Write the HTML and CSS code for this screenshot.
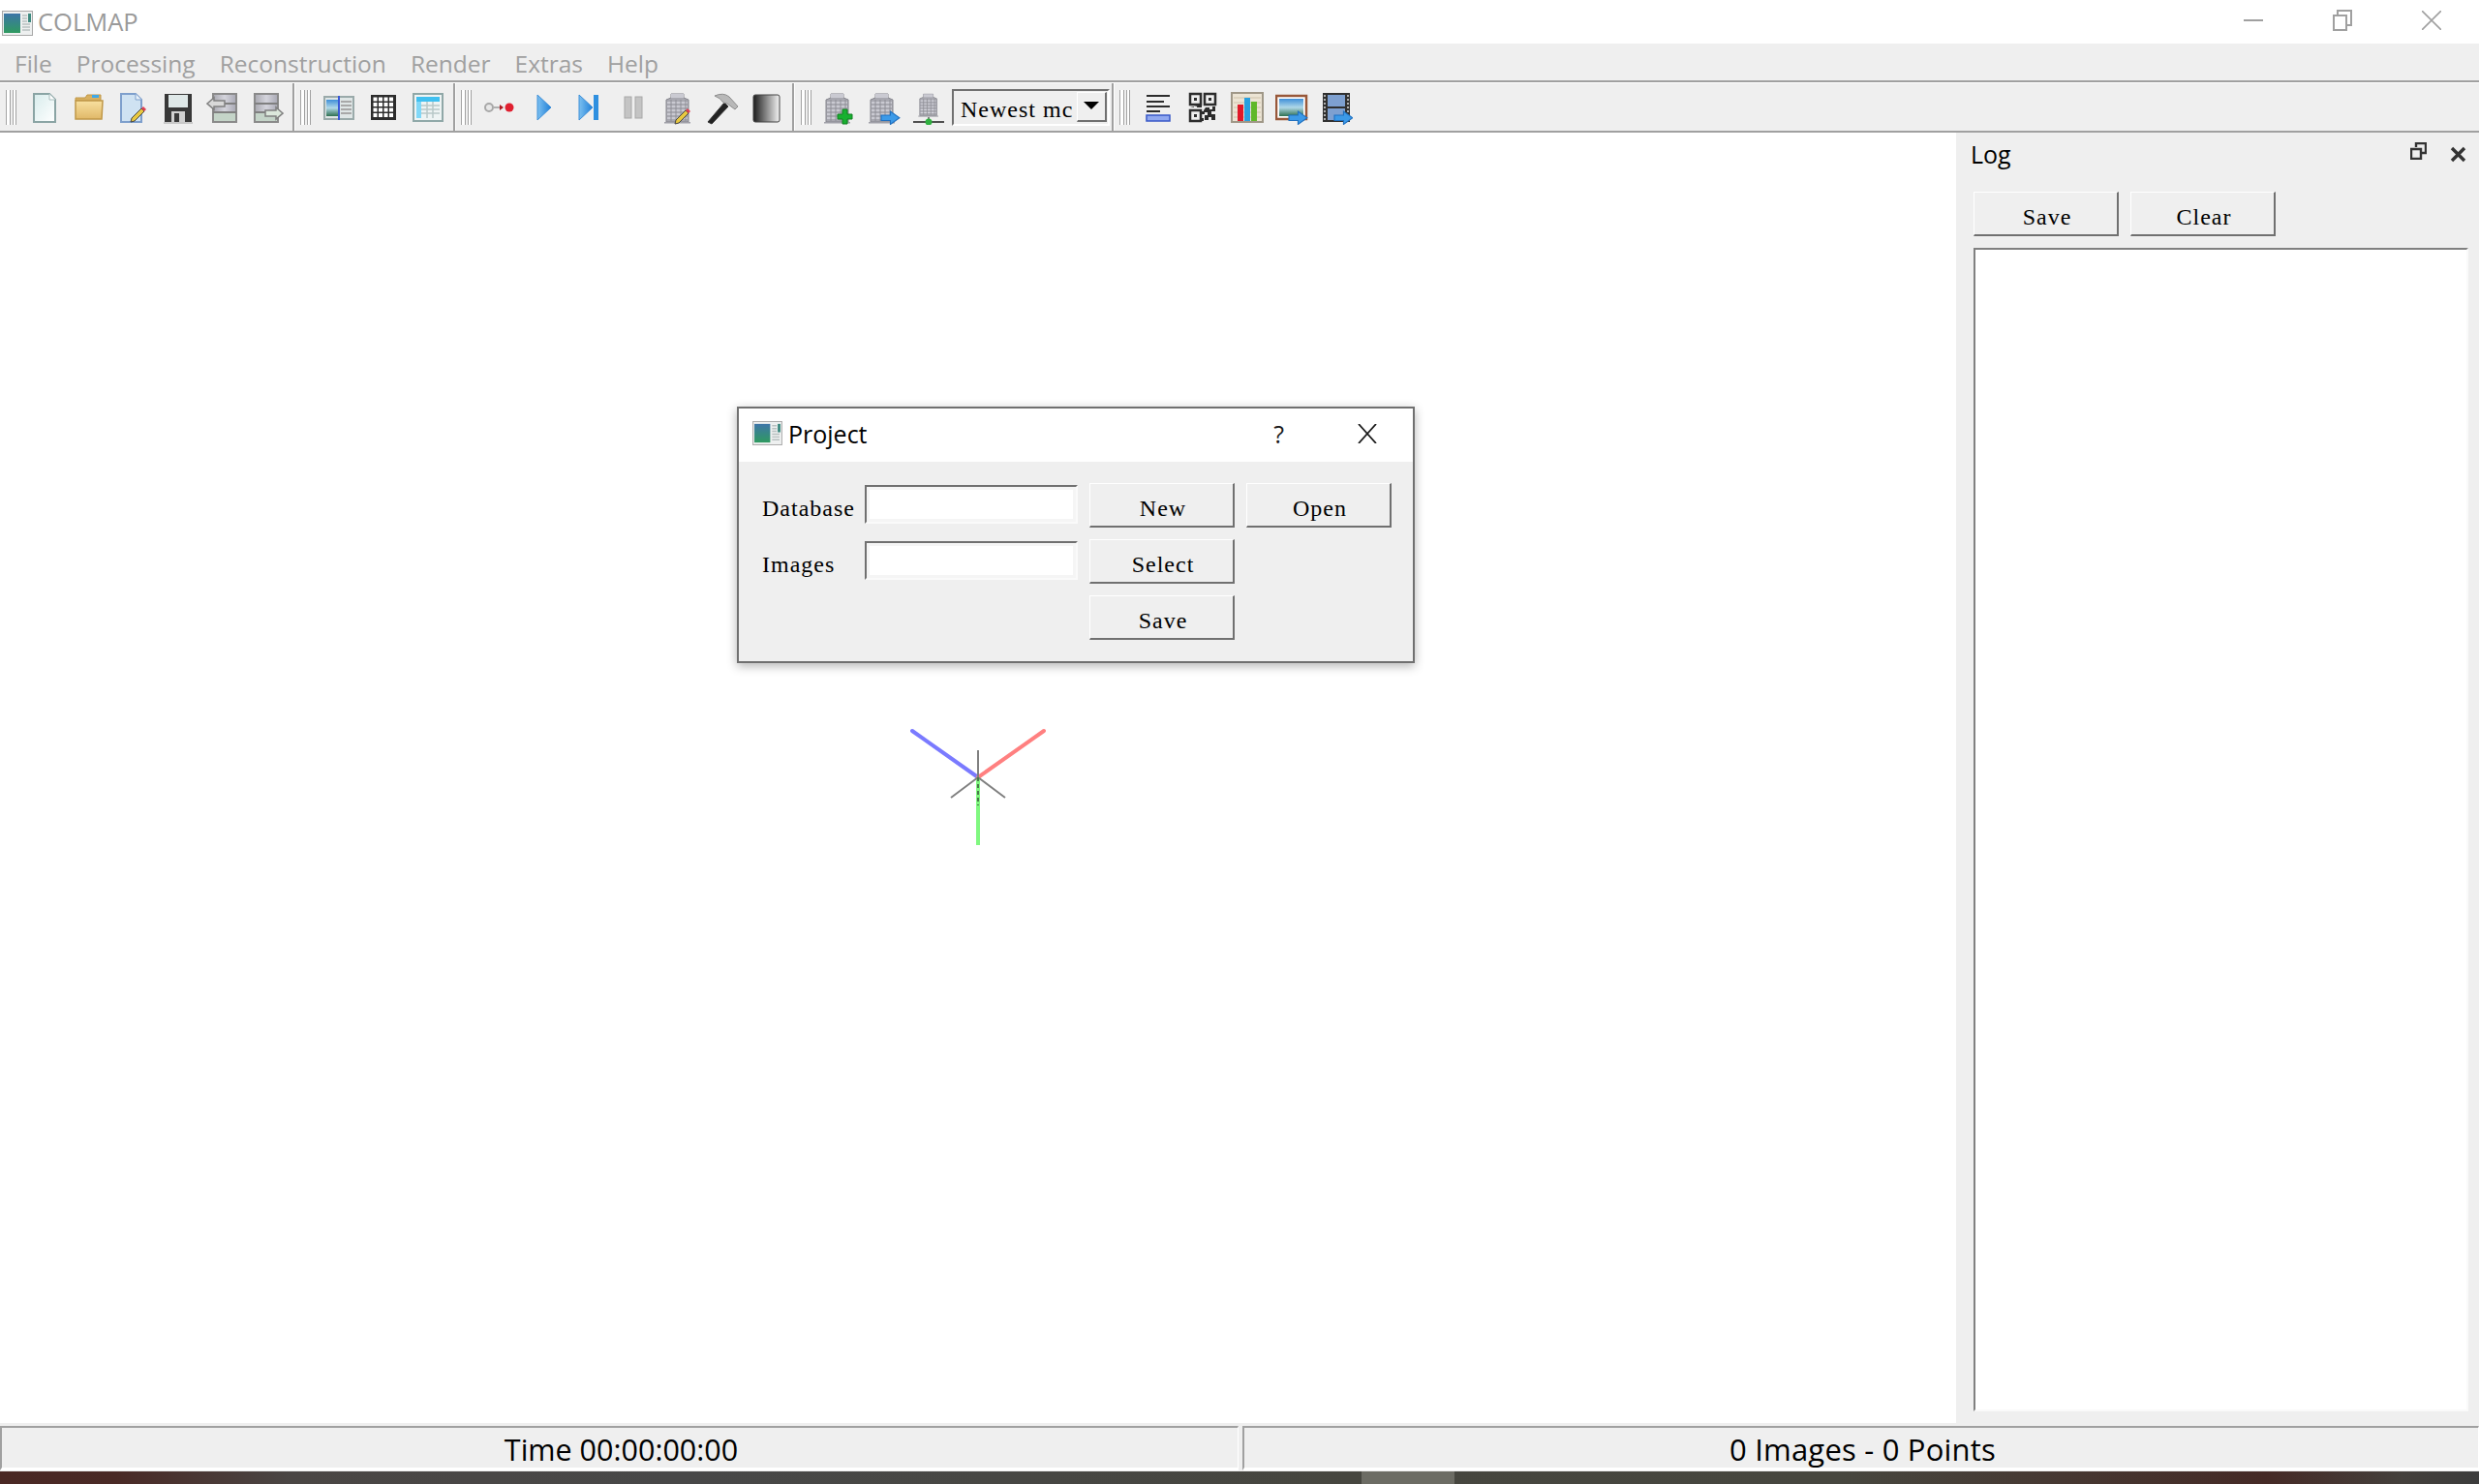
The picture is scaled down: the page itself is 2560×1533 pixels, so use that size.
FILE: index.html
```html
<!DOCTYPE html>
<html lang="en">

<head>
    <meta charset="UTF-8">
    <title>COLMAP</title>
    <link rel="stylesheet" href="styles.css">
</head>

<body>

    <!-- shared gradients and shapes for the toolbar icons -->
    <svg class="defs" width="0" height="0">
        <defs>
            <linearGradient id="gPaper" x1="0" y1="0" x2="1" y2="1">
                <stop offset="0" stop-color="#d8ecec" />
                <stop offset="1" stop-color="#ffffff" />
            </linearGradient>
            <linearGradient id="gBlue" x1="0" y1="0" x2="1" y2="0">
                <stop offset="0" stop-color="#7cc0f0" />
                <stop offset="1" stop-color="#1f7fd8" />
            </linearGradient>
            <linearGradient id="gShade" x1="0" y1="0" x2="1" y2="0">
                <stop offset="0" stop-color="#1c1c1c" />
                <stop offset="1" stop-color="#f4f4f4" />
            </linearGradient>
            <linearGradient id="gLand" x1="0" y1="0" x2="0" y2="1">
                <stop offset="0" stop-color="#3f8fd8" />
                <stop offset=".5" stop-color="#b0d8e8" />
                <stop offset="1" stop-color="#2f7050" />
            </linearGradient>
            <linearGradient id="gApp" x1="0" y1="0" x2="0" y2="1">
                <stop offset="0" stop-color="#3d75a8" />
                <stop offset="1" stop-color="#2f9a60" />
            </linearGradient>
            <linearGradient id="gFold" x1="0" y1="0" x2="0" y2="1">
                <stop offset="0" stop-color="#f8e0a0" />
                <stop offset="1" stop-color="#e0b868" />
            </linearGradient>
            <linearGradient id="gStack" x1="0" y1="0" x2="1" y2="0">
                <stop offset="0" stop-color="#a8a8b0" />
                <stop offset=".5" stop-color="#d4d4dc" />
                <stop offset="1" stop-color="#a8a8b4" />
            </linearGradient>

            <symbol id="appIcon" viewBox="0 0 32 26">
                <rect x=".5" y=".5" width="31" height="25" fill="#eef0f0" stroke="#a8a8a8" />
                <rect x="2" y="3" width="17" height="20" fill="url(#gApp)" />
                <path d="M21 5h5M21 8h5M21 11h5M21 14h8M21 17h8M21 20h8" stroke="#b8c0c0" stroke-width="1.5" />
                <rect x="27" y="3" width="3" height="9" fill="#3d8a80" />
            </symbol>

            <symbol id="building" viewBox="0 0 34 36">
                <path d="M5 10l5-2V4h13v4l5 2v23H5z" fill="#a8a8b0" stroke="#85858d" />
                <rect x="10" y="4" width="13" height="4" fill="#cacad2" />
                <path d="M6 13h21M6 17h21M6 21h21M6 25h21M6 29h21" stroke="#d4d4dc" stroke-width="1.500" />
                <path d="M10 10v22M15 10v22M20 10v22M25 10v22" stroke="#8e8e96" />
                <rect x="3" y="33" width="27" height="1.500" fill="#a0a0a8" />
            </symbol>

            <symbol id="stack" viewBox="0 0 34 36">
                <rect x="5" y="4" width="24" height="29" fill="url(#gStack)" stroke="#8a8a8a" stroke-width="2" />
                <rect x="6" y="24" width="22" height="8" fill="#c4d4c8" />
                <path d="M5 14h24M5 23h24" stroke="#808080" stroke-width="2" />
            </symbol>

            <g id="arrowBlue">
                <path d="M0 3h7V0l7 5-7 5V7H0z" fill="#3c9ae8" stroke="#1f70c0" stroke-width=".8" />
            </g>
            <g id="pencil">
                <path d="M3 13 13 3l3 3L6 16l-4 1z" fill="#e8c840" stroke="#444" />
                <path d="M13 3l2-2 3 3-2 2z" fill="#e04050" />
            </g>
        </defs>
    </svg>

    <header class="titlebar">
        <svg class="app-icon" width="32" height="26"><use href="#appIcon" /></svg>
        <span class="app-name">COLMAP</span>
        <div class="caption">
            <svg class="cap-btn" width="20" height="20" viewBox="0 0 20 20">
                <path d="M0 10h20" stroke="#a0a0a0" stroke-width="2" />
            </svg>
            <svg class="cap-btn" width="20" height="22" viewBox="0 0 20 22">
                <path d="M1 6h13v15H1zM5 6V1h14v15h-5" fill="none" stroke="#a0a0a0" stroke-width="2" />
            </svg>
            <svg class="cap-btn" width="20" height="20" viewBox="0 0 20 20">
                <path d="M0 0l20 20M20 0 0 20" stroke="#a0a0a0" stroke-width="1.6" />
            </svg>
        </div>
    </header>

    <nav class="menubar">
        <span class="menu-item">File</span>
        <span class="menu-item">Processing</span>
        <span class="menu-item">Reconstruction</span>
        <span class="menu-item">Render</span>
        <span class="menu-item">Extras</span>
        <span class="menu-item">Help</span>
    </nav>

    <div class="toolbar">
        <div class="tool-group">
            <span class="handle"></span>
            <span class="tool"><svg width="34" height="36" viewBox="0 0 34 36">
                <path d="M6 4h16l6 6v23H6z" fill="url(#gPaper)" stroke="#8aa4a4" stroke-width="2" />
                <path d="M22 4v6h6" fill="#fff" stroke="#a8bcbc" />
            </svg></span>
            <span class="tool"><svg width="34" height="36" viewBox="0 0 34 36">
                <path d="M3 8h10l2-3h14v6H3z" fill="#d8b060" stroke="#c09848" />
                <rect x="20" y="5" width="7" height="3" fill="#40a8e8" />
                <path d="M3 11h28l-1 19H3z" fill="url(#gFold)" stroke="#c09848" stroke-width="1.5" />
            </svg></span>
            <span class="tool"><svg width="34" height="36" viewBox="0 0 34 36">
                <path d="M4 4h15l6 6v23H4z" fill="#cfe2f2" stroke="#7e9fcc" stroke-width="2" />
                <path d="M19 4v6h6" fill="#e8f2fa" stroke="#7e9fcc" />
                <use href="#pencil" x="12" y="16" />
            </svg></span>
            <span class="tool"><svg width="34" height="36" viewBox="0 0 34 36">
                <rect x="3" y="4" width="28" height="29" fill="#383838" />
                <rect x="7" y="5" width="20" height="13" fill="#dfe8e8" />
                <rect x="10" y="22" width="14" height="11" fill="#d0d0d0" />
                <rect x="13" y="24" width="5" height="9" fill="#383838" />
                <rect x="2" y="33" width="30" height="2" fill="#c8c8c8" />
            </svg></span>
            <span class="tool"><svg width="34" height="36" viewBox="0 0 34 36">
                <use href="#stack" width="34" height="36" x="2" />
                <path d="M1 14l7-6v3h11v6H8v3z" fill="#d8d8d8" stroke="#808080" stroke-width="1.5" />
            </svg></span>
            <span class="tool"><svg width="34" height="36" viewBox="0 0 34 36">
                <use href="#stack" width="34" height="36" x="-1" />
                <path d="M33 24l-7-6v3H15v6h11v3z" fill="#dce8dc" stroke="#808080" stroke-width="1.5" />
            </svg></span>
        </div>

        <div class="tool-group">
            <span class="handle"></span>
            <span class="tool"><svg width="34" height="36" viewBox="0 0 34 36">
                <rect x="2" y="7" width="30" height="23" fill="#dfe6e6" stroke="#9aaaaa" stroke-width="2" />
                <rect x="4" y="10" width="13" height="17" fill="url(#gLand)" />
                <path d="M19 12h11M19 16h11M19 20h11M19 24h11" stroke="#a8a8a8" stroke-width="2" />
                <rect x="16" y="6" width="2" height="25" fill="#3858d8" />
            </svg></span>
            <span class="tool"><svg width="34" height="36" viewBox="0 0 34 36">
                <rect x="4" y="5" width="26" height="26" fill="#2c2c2c" />
                <g fill="#fff">
                    <rect x="6.500" y="7.500" width="4" height="4" /><rect x="12" y="7.500" width="4" height="4" /><rect x="17.500" y="7.500" width="4" height="4" /><rect x="23" y="7.500" width="4" height="4" />
                    <rect x="6.500" y="13" width="4" height="4" /><rect x="12" y="13" width="4" height="4" /><rect x="17.500" y="13" width="4" height="4" /><rect x="23" y="13" width="4" height="4" />
                    <rect x="6.500" y="18.500" width="4" height="4" /><rect x="12" y="18.500" width="4" height="4" /><rect x="17.500" y="18.500" width="4" height="4" /><rect x="23" y="18.500" width="4" height="4" />
                    <rect x="6.500" y="24" width="4" height="4" /><rect x="12" y="24" width="4" height="4" /><rect x="17.500" y="24" width="4" height="4" /><rect x="23" y="24" width="4" height="4" />
                </g>
            </svg></span>
            <span class="tool"><svg width="34" height="36" viewBox="0 0 34 36">
                <rect x="2" y="4" width="30" height="28" fill="#eef4f4" stroke="#90a8a8" stroke-width="2" />
                <rect x="5" y="7" width="24" height="5" fill="#40c0f0" />
                <rect x="5" y="12" width="5" height="17" fill="#80d8f8" />
                <path d="M10 16h19M10 20h19M10 24h19M16 12v17M22 12v17" stroke="#b8c8c8" stroke-width="1.5" />
            </svg></span>
        </div>

        <div class="tool-group">
            <span class="handle"></span>
            <span class="tool"><svg width="34" height="36" viewBox="0 0 34 36">
                <circle cx="6" cy="18" r="4" fill="#e8e8e8" stroke="#a8a8a8" stroke-width="2" />
                <path d="M10 18h8" stroke="#b0b0b0" stroke-width="2" />
                <path d="M17 15l4 3-4 3z" fill="#b01820" />
                <circle cx="27" cy="18" r="4.500" fill="#e02030" />
            </svg></span>
            <span class="tool"><svg width="34" height="36" viewBox="0 0 34 36">
                <path d="M10 5l14 13-14 13z" fill="url(#gBlue)" stroke="#3c8ed8" />
            </svg></span>
            <span class="tool"><svg width="34" height="36" viewBox="0 0 34 36">
                <path d="M7 5l14 13-14 13z" fill="url(#gBlue)" stroke="#3c8ed8" />
                <rect x="22" y="5" width="5" height="26" fill="#2f90e0" />
            </svg></span>
            <span class="tool"><svg width="34" height="36" viewBox="0 0 34 36">
                <rect x="8" y="7" width="7" height="22" fill="#c4c4c4" stroke="#a8a8a8" />
                <rect x="19" y="7" width="7" height="22" fill="#c4c4c4" stroke="#a8a8a8" />
            </svg></span>
            <span class="tool"><svg width="34" height="36" viewBox="0 0 34 36">
                <use href="#building" width="34" height="36" />
                <use href="#pencil" x="12" y="18" />
            </svg></span>
            <span class="tool"><svg width="34" height="36" viewBox="0 0 34 36">
                <path d="M2 33 19 13l4 4L6 35z" fill="#222" stroke="#333" />
                <path d="M9 6q9-4 15 1l9 10-3 3-8-6-4-1q-3-5-9-7z" fill="#b8b8b8" stroke="#8c8c8c" />
            </svg></span>
            <span class="tool"><svg width="34" height="36" viewBox="0 0 34 36">
                <rect x="3" y="5" width="27" height="28" rx="2" fill="url(#gShade)" stroke="#444" />
            </svg></span>
        </div>

        <div class="tool-group tool-group-combo">
            <span class="handle"></span>
            <span class="tool"><svg width="34" height="36" viewBox="0 0 34 36">
                <use href="#building" width="34" height="36" x="-2" />
                <path d="M20 20h5v5h5v5h-5v5h-5v-5h-5v-5h5z" fill="#18b030" stroke="#108020" />
            </svg></span>
            <span class="tool"><svg width="34" height="36" viewBox="0 0 34 36">
                <use href="#building" width="34" height="36" x="-2" />
                <use href="#arrowBlue" transform="translate(14 22) scale(1.350)" />
            </svg></span>
            <span class="tool"><svg width="34" height="36" viewBox="0 0 34 36">
                <use href="#building" width="26" height="30" x="4" />
                <path d="M17 28v5" stroke="#808080" stroke-width="2" />
                <rect x="1" y="32" width="32" height="2" fill="#505050" />
                <circle cx="17" cy="33" r="3.500" fill="#30b040" />
            </svg></span>
            <div class="combo">
                <span class="combo-text">Newest mc</span>
                <span class="combo-btn"><span class="combo-arrow"></span></span>
            </div>
        </div>

        <div class="tool-group">
            <span class="handle"></span>
            <span class="tool"><svg width="34" height="36" viewBox="0 0 34 36">
                <path d="M5 6h24M5 12h18M5 17h24M5 22h14" stroke="#2c2c2c" stroke-width="2" />
                <rect x="5" y="26" width="24" height="6" fill="#90a8f0" stroke="#3858c8" stroke-width="1.500" />
            </svg></span>
            <span class="tool"><svg width="34" height="36" viewBox="0 0 34 36">
                <path d="M4 4h11v11H4zM19 4h11v11H19zM4 21h11v11H4z" fill="none" stroke="#2c2c2c" stroke-width="2.500" />
                <path d="M8 8h3v3H8zM23 8h3v3h-3zM8 25h3v3H8zM4 18h4v-1h3v1h5v-3M20 18h4v2h3v-3h3v5h-4v3h4v6h-4v-3h-3v3h-4v-5h3v-3h-4v-2zM16 22h3v3h-3zM16 29h2v3h-2z" fill="#2c2c2c" />
            </svg></span>
            <span class="tool"><svg width="34" height="36" viewBox="0 0 34 36">
                <rect x="1" y="3" width="32" height="30" fill="#ece4d4" stroke="#a09888" stroke-width="2" />
                <path d="M3 8h28M3 13h28M3 18h28M3 23h28M3 28h28" stroke="#d8cdb8" stroke-width="1.500" />
                <rect x="7" y="15" width="6" height="17" fill="#e01828" />
                <rect x="14" y="8" width="6" height="24" fill="#28a0e0" />
                <rect x="21" y="12" width="6" height="20" fill="#60b828" />
            </svg></span>
            <span class="tool"><svg width="34" height="36" viewBox="0 0 34 36">
                <rect x="1" y="6" width="31" height="24" fill="#fff" stroke="#98583a" stroke-width="2.500" />
                <rect x="4" y="9" width="25" height="18" fill="url(#gLand)" />
                <use href="#arrowBlue" transform="translate(14 22) scale(1.350)" />
            </svg></span>
            <span class="tool"><svg width="34" height="36" viewBox="0 0 34 36">
                <rect x="3" y="3" width="28" height="30" fill="#303030" />
                <rect x="8" y="5" width="18" height="12" fill="#7ea0d0" />
                <rect x="8" y="19" width="18" height="12" fill="#7ea0d0" />
                <path d="M5 5v26M29 5v26" stroke="#b0b0b0" stroke-width="2" stroke-dasharray="2 2" />
                <use href="#arrowBlue" transform="translate(15 22) scale(1.350)" />
            </svg></span>
        </div>
    </div>

    <main class="content">
        <section class="viewport">
            <svg class="axes" width="150" height="140" viewBox="0 0 150 140">
                <path d="M75 63 7 15" stroke="#7a7aff" stroke-width="4" stroke-linecap="round" />
                <path d="M75 63 143 15" stroke="#ff8080" stroke-width="4" stroke-linecap="round" />
                <path d="M75 63v70" stroke="#80f880" stroke-width="4" />
                <path d="M75 63V35M75 63 47 84M75 63l28 21" stroke="#808080" stroke-width="2" />
                <path d="M75 63v29" stroke="#4a7a4a" stroke-width="2" stroke-dasharray="4 3" />
            </svg>

            <div class="dialog">
                <div class="dialog-title">
                    <svg class="dialog-icon" width="31" height="25"><use href="#appIcon" /></svg>
                    <span class="dialog-name">Project</span>
                    <span class="dialog-help">?</span>
                    <svg class="dialog-close" width="20" height="20" viewBox="0 0 20 20">
                        <path d="M1 0l18 20M19 0 1 20" stroke="#1a1a1a" stroke-width="1.800" />
                    </svg>
                </div>
                <form class="dialog-form">
                    <label class="qlabel">Database</label>
                    <input class="qinput" type="text">
                    <button class="qbutton" type="button">New</button>
                    <button class="qbutton" type="button">Open</button>

                    <label class="qlabel">Images</label>
                    <input class="qinput" type="text">
                    <button class="qbutton" type="button">Select</button>
                    <span></span>

                    <span></span>
                    <span></span>
                    <button class="qbutton" type="button">Save</button>
                </form>
            </div>
        </section>

        <aside class="dock">
            <div class="dock-head">
                <span class="dock-title">Log</span>
                <svg class="dock-float" width="17" height="18" viewBox="0 0 17 18">
                    <path d="M6 5V1h10v10h-5M1 7h10v10H1z" fill="none" stroke="#333" stroke-width="2.400" />
                </svg>
                <svg class="dock-close" width="17" height="17" viewBox="0 0 17 17">
                    <path d="M2 2l13 13M15 2 2 15" stroke="#333" stroke-width="3.400" />
                </svg>
            </div>
            <div class="dock-buttons">
                <button class="qbutton" type="button">Save</button>
                <button class="qbutton" type="button">Clear</button>
            </div>
            <div class="log-box"></div>
        </aside>
    </main>

    <footer class="statusbar">
        <div class="status-cell status-time">Time 00:00:00:00</div>
        <div class="status-cell status-count">0 Images - 0 Points</div>
    </footer>

    <div class="desktop-strip"><span class="strip-tab"></span></div>

</body>

</html>
```

FILE: styles.css
```css
html,
body {
    margin: 0;
    height: 1533px;
    overflow: hidden;
}

body {
    display: flex;
    flex-direction: column;
    font-family: "Open Sans", "Noto Sans", sans-serif;
    background: white;
}

.defs {
    position: absolute;
}

/* title bar */
.titlebar {
    height: 45px;
    display: flex;
    align-items: center;
    background: white;
    flex: none;
}

.app-icon {
    margin-left: 2px;
    margin-top: 2px;
}

.app-name {
    margin-left: 5px;
    font-size: 25.500px;
    color: #9a9a9a;
    margin-top: -2px;
}

.caption {
    margin-left: auto;
    display: flex;
    align-items: center;
    gap: 72px;
    padding-right: 39px;
    padding-bottom: 3px;
}

/* menu */
.menubar {
    height: 38px;
    flex: none;
    display: flex;
    align-items: center;
    background: #efefef;
    border-bottom: 2px solid #a0a0a0;
    padding-left: 15px;
    gap: 25px;
    box-shadow: 0 1px 0 white;
    position: relative;
}

.menu-item {
    font-size: 24.500px;
    color: #a0a0a0;
    margin-top: 2px;
}

/* toolbar */
.toolbar {
    height: 49px;
    margin-top: 1px;
    flex: none;
    display: flex;
    background: #efefef;
    border-bottom: 2px solid #a0a0a0;
}

.tool-group {
    display: flex;
    align-items: center;
    padding-left: 6px;
    padding-right: 3px;
    border-right: 2px solid #a0a0a0;
    box-shadow: 1px 0 0 white;
}

.tool-group:last-child {
    border-right: none;
    box-shadow: none;
}

.tool-group-combo {
    padding-left: 7px;
    padding-right: 2px;
}

.handle {
    width: 12px;
    height: 36px;
    margin-right: 5px;
    flex: none;
    background: linear-gradient(90deg, #a4a4a4 0 1px, white 1px 4px, #a0a0a0 4px 5px, #efefef 5px 7px, #a4a4a4 7px 8px, white 8px 10px, #a0a0a0 10px 11px, transparent 11px);
}

.tool {
    width: 46px;
    display: flex;
    justify-content: center;
    flex: none;
}

.combo {
    width: 163px;
    height: 38px;
    box-sizing: border-box;
    margin-left: 1px;
    display: flex;
    align-items: center;
    border: 2px solid;
    border-color: #707070 white white #707070;
    font-family: "Liberation Serif", serif;
    font-size: 24px;
    letter-spacing: 1px;
    color: black;
}

.combo-text {
    margin-left: 7px;
    margin-top: 6px;
    width: 117px;
    white-space: nowrap;
    flex: none;
}

.combo-btn {
    width: 31px;
    height: 31px;
    margin-left: 3px;
    box-sizing: border-box;
    display: flex;
    justify-content: center;
    padding-top: 9px;
    border: 1px solid;
    border-color: white #707070 #707070 white;
    border-width: 1px 2px 2px 1px;
}

.combo-arrow {
    width: 0;
    height: 0;
    border-left: 8px solid transparent;
    border-right: 8px solid transparent;
    border-top: 8px solid black;
}

/* central area */
.content {
    flex: 1;
    display: flex;
    min-height: 0;
    background: #efefef;
}

.viewport {
    width: 2020px;
    position: relative;
    background: white;
}

.axes {
    position: absolute;
    left: 935px;
    top: 603px;
}

.dialog {
    position: absolute;
    left: 761px;
    top: 283px;
    width: 700px;
    height: 265px;
    box-sizing: border-box;
    border: 2px solid #707070;
    background: #efefef;
    box-shadow: 0 3px 10px rgba(0, 0, 0, 0.3);
}

.dialog-title {
    height: 55px;
    box-sizing: border-box;
    padding-bottom: 4px;
    display: flex;
    align-items: center;
    background: white;
    color: black;
}

.dialog-icon {
    margin-left: 14px;
}

.dialog-name {
    margin-left: 6px;
    font-size: 25px;
    flex: 1;
}

.dialog-help {
    font-size: 25px;
    margin-right: 76px;
    color: #1a1a1a;
}

.dialog-close {
    margin-right: 37px;
}

.dialog-form {
    display: grid;
    grid-template-columns: 94px 220px 150px 150px;
    grid-auto-rows: 46px;
    column-gap: 12px;
    row-gap: 12px;
    padding: 22px 0 0 24px;
}

.qlabel {
    font-family: "Liberation Serif", serif;
    font-size: 24px;
    letter-spacing: 1px;
    line-height: 52px;
    color: black;
    white-space: nowrap;
}

.qinput {
    width: 220px;
    height: 40px;
    margin-top: 2px;
    padding: 0;
    box-sizing: border-box;
    background: white;
    border: 2px solid;
    border-color: #707070 #fafafa #fafafa #707070;
    box-shadow: inset 0 -3px 0 #f5f5f5, inset 3px 0 0 #f5f5f5, inset 0 3px 0 #f5f5f5, inset -3px 0 0 #f5f5f5;
    outline: none;
}

.qbutton {
    width: 150px;
    height: 46px;
    padding: 7px 0 0 3px;
    box-sizing: border-box;
    background: #efefef;
    border-style: solid;
    border-width: 1px 2px 2px 1px;
    border-color: white #707070 #707070 white;
    font-family: "Liberation Serif", serif;
    font-size: 24px;
    letter-spacing: 1px;
    color: black;
}

/* log dock */
.dock {
    flex: 1;
    display: flex;
    flex-direction: column;
    padding: 0 11px 12px 18px;
    min-width: 0;
}

.dock-head {
    height: 61px;
    display: flex;
    align-items: center;
}

.dock-title {
    flex: 1;
    font-size: 25px;
    margin-left: -3px;
    margin-top: -18px;
    color: black;
}

.dock-float {
    margin-right: 24px;
    margin-top: -24px;
}

.dock-close {
    margin-right: 2px;
    margin-top: -16px;
}

.dock-buttons {
    display: flex;
    gap: 12px;
}

.log-box {
    flex: 1;
    margin-top: 12px;
    background: white;
    border: 2px solid;
    border-color: #808080 #fafafa #fafafa #808080;
}

/* status bar */
.statusbar {
    height: 50px;
    flex: none;
    display: flex;
    background: #efefef;
    padding-top: 3px;
    box-sizing: border-box;
    gap: 4px;
}

.status-cell {
    height: 46px;
    box-sizing: border-box;
    padding-top: 2px;
    display: flex;
    align-items: center;
    justify-content: center;
    border-style: solid;
    border-width: 2px 1px 3px 2px;
    border-color: #a0a0a0 white white #a0a0a0;
    font-size: 31px;
    color: black;
}

.status-time {
    width: 1279px;
    font-size: 30.500px;
    padding-left: 3px;
}

.status-count {
    flex: 1;
    letter-spacing: 0.200px;
    padding-left: 3px;
}

.desktop-strip {
    height: 13px;
    flex: none;
    display: flex;
    padding-left: 1406px;
    background: linear-gradient(90deg, #4a2824 0, #4a2a26 120px, #4a4644 300px, #484848 700px, #46463f 1400px, #47473f 1900px, #452a26 2340px, #44403c 2480px, #3c3c3c 2560px);
}

.strip-tab {
    width: 96px;
    background: #6c6c64;
}
```
